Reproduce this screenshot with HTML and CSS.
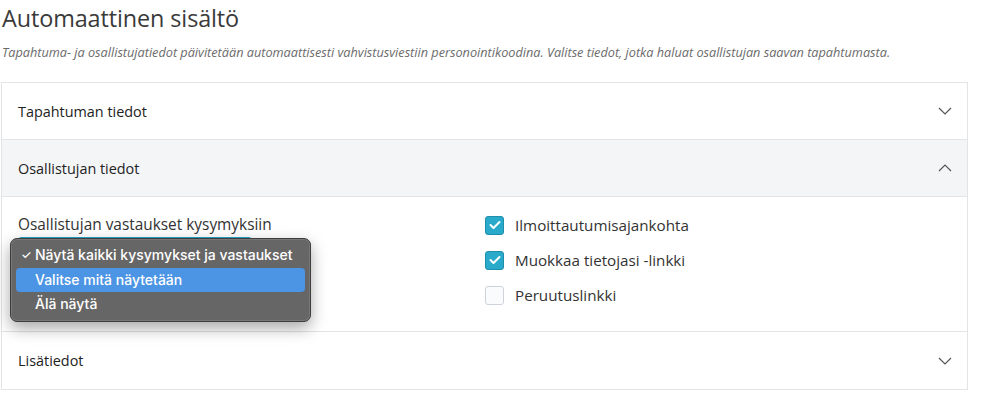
FILE: index.html
```html
<!DOCTYPE html>
<html lang="fi">
<head>
<meta charset="utf-8">
<link rel="stylesheet" href="styles.css">
</head>
<body>
<div class="page">
  <h1 class="title">Automaattinen sisältö</h1>
  <p class="desc">Tapahtuma- ja osallistujatiedot päivitetään automaattisesti vahvistusviestiin personointikoodina. Valitse tiedot, jotka haluat osallistujan saavan tapahtumasta.</p>
  <div class="accordion">
    <div class="acc-head">
      <span>Tapahtuman tiedot</span>
      <svg class="chev" width="14" height="8" viewBox="0 0 14 8"><path d="M1 1l6 6 6-6" fill="none" stroke="#555" stroke-width="1.2"/></svg>
    </div>
    <div class="acc-head open">
      <span>Osallistujan tiedot</span>
      <svg class="chev" width="14" height="8" viewBox="0 0 14 8"><path d="M1 7l6-6 6 6" fill="none" stroke="#555" stroke-width="1.2"/></svg>
    </div>
    <div class="acc-body">
      <div class="col">
        <div class="field-label">Osallistujan vastaukset kysymyksiin</div>
        <div class="select-wrap">
          <div class="select"></div>
          <div class="menu">
            <div class="opt"><span class="tick">✓</span>Näytä kaikki kysymykset ja vastaukset</div>
            <div class="opt active">Valitse mitä näytetään</div>
            <div class="opt">Älä näytä</div>
          </div>
        </div>
      </div>
      <div class="col checks">
        <label class="check"><span class="box on"><svg width="12" height="10" viewBox="0 0 12 10"><path d="M1.5 5l3 3 6-6" fill="none" stroke="#fff" stroke-width="2" stroke-linecap="round" stroke-linejoin="round"/></svg></span>Ilmoittautumisajankohta</label>
        <label class="check"><span class="box on"><svg width="12" height="10" viewBox="0 0 12 10"><path d="M1.5 5l3 3 6-6" fill="none" stroke="#fff" stroke-width="2" stroke-linecap="round" stroke-linejoin="round"/></svg></span>Muokkaa tietojasi -linkki</label>
        <label class="check"><span class="box"></span>Peruutuslinkki</label>
      </div>
    </div>
    <div class="acc-head last">
      <span>Lisätiedot</span>
      <svg class="chev" width="14" height="8" viewBox="0 0 14 8"><path d="M1 1l6 6 6-6" fill="none" stroke="#555" stroke-width="1.2"/></svg>
    </div>
  </div>
</div>
</body>
</html>
```

FILE: styles.css
```css
* { box-sizing: border-box; }
html, body { margin: 0; padding: 0; background: #fff; }
body {
  font-family: "Open Sans", "Noto Sans", sans-serif;
  color: #333;
}
.page {
  width: 968px;
  padding: 0 0 0 1px;
}
.title {
  margin: 0;
  padding: 4px 0 0 1px;
  font-size: 23.4px;
  font-weight: 400;
  line-height: 28px;
  color: #3a3a3a;
  letter-spacing: -0.1px;
}
.desc {
  margin: 12px 0 0 1px;
  font-size: 12.7px;
  font-style: italic;
  line-height: 16px;
  color: #6b6b6b;
}
.accordion {
  margin-top: 22px;
  border: 1px solid #e4e4e4;
  background: #fff;
}
.acc-head {
  height: 57px;
  display: flex;
  align-items: center;
  justify-content: space-between;
  padding: 0 15px 0 16px;
  font-size: 14.4px;
  color: #222;
  border-bottom: 1px solid #e4e4e4;
}
.acc-head.open { background: #f4f5f7; }
.acc-head.last { border-bottom: none; }
.chev { display: block; }
.acc-body {
  height: 135px;
  display: grid;
  grid-template-columns: 1fr 1fr;
  padding: 18px 17px 0 16px;
  border-bottom: 1px solid #e4e4e4;
}
.field-label {
  font-size: 15.4px;
  line-height: 20px;
  color: #333;
}
.select-wrap { position: relative; margin-top: 2px; }
.select {
  width: 234px;
  height: 34px;
  border: 1px solid #2aa5c5;
  border-radius: 3px;
}
.menu {
  position: absolute;
  left: -8px;
  top: 1px;
  width: 301px;
  padding: 4px 5px;
  background: #666;
  border: 1px solid #3e3e3e;
  border-radius: 7px;
  box-shadow: 0 6px 16px rgba(0,0,0,0.35), inset 0 0 0 1px rgba(255,255,255,0.12);
  font-family: "Inter", "Liberation Sans", sans-serif;
  font-size: 14px;
  font-weight: 500;
  color: #fff;
}
.opt {
  position: relative;
  height: 24.5px;
  line-height: 24.5px;
  padding-left: 19px;
  border-radius: 4px;
}
.opt.active { background: #4c94e4; }
.tick {
  position: absolute;
  left: 5px;
  font-size: 12px;
}
.checks {
  padding-left: 1px;
  display: flex;
  flex-direction: column;
  gap: 15px;
  padding-top: 0;
}
.check {
  display: flex;
  align-items: center;
  font-size: 15.2px;
  line-height: 20px;
  color: #333;
  height: 20px;
}
.box {
  width: 19px;
  height: 19px;
  margin-right: 11px;
  border: 1px solid #cdd3d8;
  border-radius: 3px;
  background: #fafbfc;
  display: flex;
  align-items: center;
  justify-content: center;
}
.box.on {
  background: #29aacb;
  border-color: #1f8eab;
}
```
